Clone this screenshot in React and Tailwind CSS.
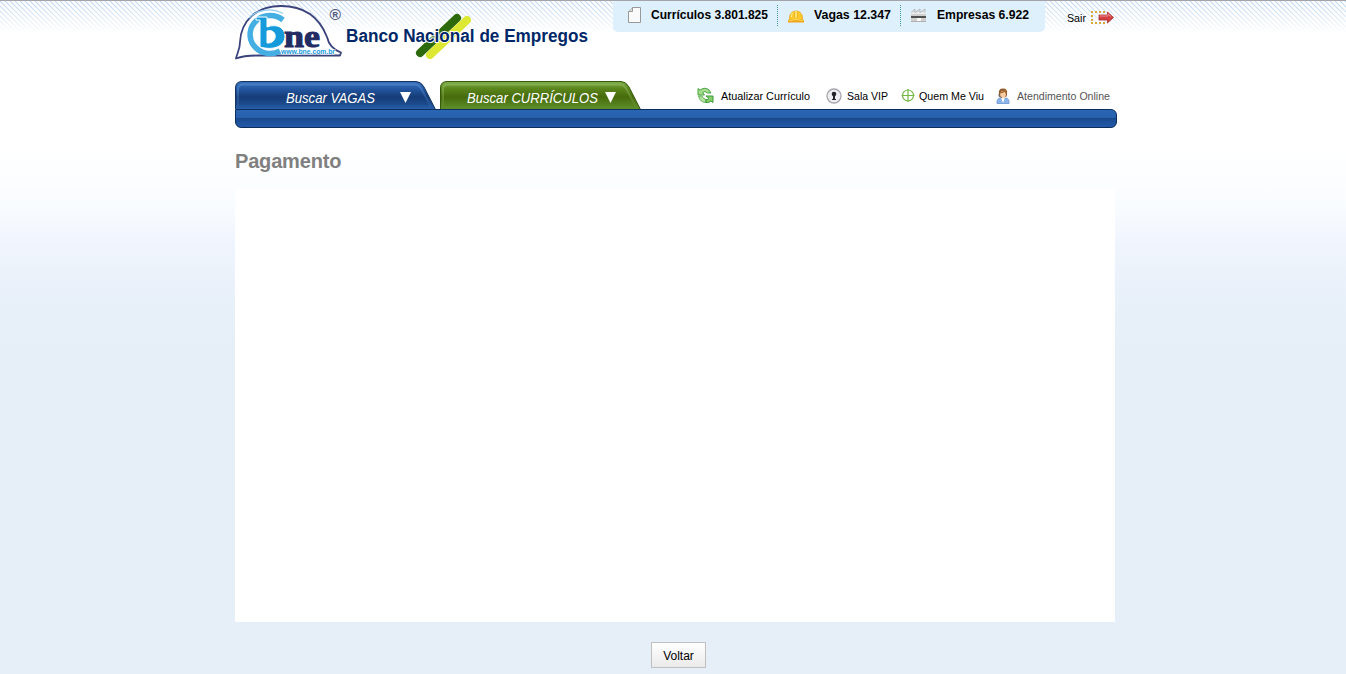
import React from "react";

function Logo() {
  return (
    <svg width="356" height="64" viewBox="0 0 356 64" className="block shrink-0 overflow-visible" fontFamily="'Liberation Sans', Arial, sans-serif">
      <path d="M5 41C6 20 21 5 46 5C71 5 85 18 92 36C94 45 99 49 106 51.500L105 54.500H23C16 54.500 8 55 1 57.500C2 52 5 49 5 41Z" fill="#fff" stroke="#3a437c" strokeWidth="1.800" strokeLinejoin="round" />
      <path d="M48 19A20 19 0 1 0 45 50" fill="none" stroke="#45afe3" strokeWidth="5.500" />
      <path d="M48 12.500A26 23 0 0 0 14 17" fill="none" stroke="#8ccdf0" strokeWidth="1.200" />
      <path d="M21 16H32V26C42 22 50 27 50 35C50 45 39 50 25 46V19H21ZM32 30V42C43 43 43 27 32 30Z" fill="#159bdc" fillRule="evenodd" stroke="#fff" strokeWidth="1" />
      <text x="49" y="45.500" fontSize="31" fontWeight="700" fontFamily="'Liberation Serif', serif" fill="#222c62" stroke="#222c62" strokeWidth="1" textLength="36" lengthAdjust="spacingAndGlyphs">ne</text>
      <text x="46" y="52.500" fontSize="6.500" fontWeight="700" fill="#199bdc" stroke="#fff" strokeWidth="1" paintOrder="stroke" textLength="54" lengthAdjust="spacingAndGlyphs">www.bne.com.br</text>
      <text x="94.500" y="19" fontSize="15" fontWeight="700" fill="#51587f" textLength="11.500" lengthAdjust="spacingAndGlyphs">®</text>
      <path d="M185 52L222 17" stroke="#2d6a0c" strokeWidth="8" strokeLinecap="round" />
      <path d="M195 54L232 19" stroke="#dce831" strokeWidth="8" strokeLinecap="round" />
      <text x="111" y="41" fontSize="17.500" fontWeight="700" fill="#002868" stroke="#fff" strokeWidth="2" paintOrder="stroke" textLength="242" lengthAdjust="spacingAndGlyphs">Banco Nacional de Empregos</text>
    </svg>
  );
}

function PageIcon() {
  return (
    <svg width="14" height="17" viewBox="0 0 14 17" className="block">
      <path d="M4.500 .5H12.500V15.500H.5V4.500Z" fill="#fafafa" stroke="#999" />
      <path d="M4.500 .5V4.500H.5" fill="#ddd" stroke="#999" />
    </svg>
  );
}

function HelmetIcon() {
  return (
    <svg width="16" height="13" viewBox="0 0 16 13" className="block">
      <path d="M1.500 10C1 4 4 1 8 1S15 4 14.500 10Z" fill="#fcca2c" stroke="#eea41e" strokeWidth=".8" />
      <path d="M6.500 1.500V8M9.500 1.500V8" stroke="#f0ae25" strokeWidth=".8" />
      <path d="M7 1H9V8H7Z" fill="#ffe36a" />
      <path d="M3.500 7C3.500 4 4 3.500 5 2.500" fill="none" stroke="#fff0a0" />
      <path d="M0 10Q8 7.500 16 10V12.500H0Z" fill="#f1a51c" />
      <path d="M1 10.500Q8 8.500 15 10.500" fill="none" stroke="#ffe05d" />
    </svg>
  );
}

function FactoryIcon() {
  return (
    <svg width="17" height="14" viewBox="0 0 17 14" className="block">
      <path d="M1 4.500L5 1V4.500L10 1V4.500L15 1V4.500" fill="#dcdcdc" stroke="#b0b0b0" strokeWidth=".8" />
      <path d="M1 5H16V14H1Z" fill="#d0d0d0" />
      <path d="M1 5H16V6H1Z" fill="#eee" />
      <path d="M1 8H16V10H1Z" fill="#505050" />
      <path d="M7 10H11V14H7Z" fill="#fafafa" />
      <path d="M1 13H16V14H1Z" fill="#b0b0b0" />
    </svg>
  );
}

function ExitIcon() {
  return (
    <svg width="24" height="15" viewBox="0 0 24 15" className="block">
      <path d="M0 2H14M0 13H14" stroke="#d8a838" strokeWidth="2" strokeDasharray="2 2" />
      <path d="M1 5V12" stroke="#d8a838" strokeWidth="2" strokeDasharray="2 2" />
      <path d="M8 5H16.500V2L22.500 7.500L16.500 13V10H8Z" fill="#d34242" stroke="#a92c2c" strokeWidth=".8" />
      <path d="M8.500 6H17V4L20 6.500" fill="none" stroke="#ee9090" />
    </svg>
  );
}

function RefreshIcon() {
  return (
    <svg width="17" height="17" viewBox="0 0 17 17" className="block">
      <path d="M1 1.500L3 3Q8-.5 12 3L14 6H10.500Q8 3.500 5.500 5.500L7.500 8H1Z" fill="#a6db8c" stroke="#4aa544" strokeWidth="1" strokeLinejoin="round" />
      <path d="M1.500 9Q3 15.500 9 15.500V12.500Q6 12 5 9Z" fill="#b7e3a2" stroke="#4aa544" strokeWidth=".8" />
      <path d="M16 15.500L14 14Q12 16 9 15.500V12.500Q11 13 12 11.500L9 9H16Z" fill="#86cf6d" stroke="#3c9a37" strokeWidth="1" strokeLinejoin="round" />
    </svg>
  );
}

function KeyholeIcon() {
  return (
    <svg width="16" height="16" viewBox="0 0 16 16" className="block">
      <circle cx="8" cy="8" r="7" fill="#efeff3" stroke="#a6a6ac" strokeWidth="1.300" />
      <circle cx="8" cy="6" r="2.300" fill="#252529" />
      <path d="M7 6H9V11H10V12H6V11H7Z" fill="#252529" />
    </svg>
  );
}

function TargetIcon() {
  return (
    <svg width="14" height="14" viewBox="0 0 14 14" className="block" fill="none" stroke="#74b844" strokeWidth="1.200">
      <circle cx="7" cy="6.500" r="5.500" />
      <path d="M7 0V13M.5 6.500H13.500" />
    </svg>
  );
}

function AgentIcon() {
  return (
    <svg width="14" height="16" viewBox="0 0 14 16" className="block">
      <path d="M1 15.500Q.5 10.500 4 10H10Q13.500 10.500 13 15.500Z" fill="#8bb4ea" stroke="#6a94d0" strokeWidth=".8" />
      <path d="M5 9.500L7 15L9 9.500Z" fill="#fff" />
      <path d="M3 6Q2 .5 7 .5T11 6Q11 9 9.500 9H4.500Q3 9 3 6Z" fill="#8f5a2c" />
      <ellipse cx="7" cy="6.500" rx="2.800" ry="3.800" fill="#f8cfa4" />
      <path d="M4 4.500Q7 5 9 2.500L10 5" fill="none" stroke="#a86d35" strokeWidth="1.500" />
      <path d="M3 6V8.500L6 9.500" fill="none" stroke="#555" strokeWidth=".8" />
    </svg>
  );
}

function Tab({ id, width, fill, edge, glow, labelClass, labelWidth, arrowClass, children }) {
  const path = `M.5 28.500V7Q.5 .5 7 .5H${width - 20}Q${width - 15} .5 ${width - 12} 6L${width - 0.5} 28.500`;
  return (
    <div className="relative h-7" style={{ width }}>
      <svg width={width} height="28" className="absolute inset-0">
        <defs>
          <linearGradient id={id} x1="0" y1="0" x2="0" y2="1">
            {fill.map(([offset, color]) => <stop key={offset} offset={offset} stopColor={color} />)}
          </linearGradient>
          <linearGradient id={`${id}Glow`} x1="0" y1="0" x2="0" y2="1">
            <stop offset="0" stopColor={glow} stopOpacity=".6" />
            <stop offset="1" stopColor={glow} stopOpacity=".1" />
          </linearGradient>
        </defs>
        <path d={path} fill={`url(#${id})`} stroke={edge} />
        <path d={`M3 26V8Q3 3.500 8 3.500H${width - 21}Q${width - 17} 3.500 ${width - 14} 9L${width - 5} 26`} fill="none" stroke={`url(#${id}Glow)`} strokeWidth="2" />
      </svg>
      <div className={`relative flex h-full items-center pt-1 text-white ${labelClass}`}>
        <svg width={labelWidth} height="20" className="block overflow-visible" fill="#fff" fontFamily="'Liberation Sans', Arial, sans-serif">
          <text x="0" y="16" fontSize="14" fontStyle="italic" textLength={labelWidth} lengthAdjust="spacingAndGlyphs">{children}</text>
        </svg>
        <svg width="11" height="11" className={arrowClass}><path d="M0 0H11L5.500 11Z" fill="#fff" /></svg>
      </div>
    </div>
  );
}

function FittedText({ width, children, size = 11, weight = 400, fill = "#000" }) {
  return (
    <svg width={width} height="16" className="block shrink-0 overflow-visible" fontFamily="'Liberation Sans', Arial, sans-serif">
      <text x="0" y="12" fontSize={size} fontWeight={weight} fill={fill} textLength={width} lengthAdjust="spacingAndGlyphs">{children}</text>
    </svg>
  );
}

function Header() {
  return (
    <header>
      <div className="flex h-20 items-start">
        <Logo />
        <div className="ml-[22px] flex h-[31px] w-[432px] rounded-b-[5px] bg-[#dff0fd]">
          <div className="flex w-[165px] border-r border-dotted border-[#4295ab] h-[21px] mt-1 pl-[15px]">
            <div className="mt-[2px]"><PageIcon /></div>
            <div className="ml-[9px] mt-[2px]"><FittedText width={117} size={12} weight={700}>Currículos 3.801.825</FittedText></div>
          </div>
          <div className="flex w-[123px] border-r border-dotted border-[#4295ab] h-[21px] mt-1 pl-[10px]">
            <div className="mt-[5px]"><HelmetIcon /></div>
            <div className="ml-[10px] mt-[2px]"><FittedText width={77} size={12} weight={700}>Vagas 12.347</FittedText></div>
          </div>
          <div className="mt-1 flex pl-[9px]">
            <div className="mt-[3px]"><FactoryIcon /></div>
            <div className="ml-[10px] mt-[2px]"><FittedText width={92} size={12} weight={700}>Empresas 6.922</FittedText></div>
          </div>
        </div>
        <div className="ml-[22px] mt-[9px] flex items-start">
          <FittedText width={19} size={10.5}>Sair</FittedText>
          <div className="ml-[5px]"><ExitIcon /></div>
        </div>
      </div>
      <div className="flex h-7">
        <Tab id="blueTab" width={201} fill={[[0, "#3c73bd"], [0.25, "#2458a3"], [0.55, "#153c77"], [0.8, "#1c4a8b"], [1, "#2863ae"]]} edge="#12345e" glow="#568bd3" labelClass="pl-[51px]" labelWidth={89} arrowClass="ml-[25px]">Buscar VAGAS</Tab>
        <div className="ml-1"><Tab id="greenTab" width={201} fill={[[0, "#7fae4b"], [0.25, "#5b861c"], [0.55, "#466b0c"], [1, "#60902a"]]} edge="#365b0b" glow="#91b860" labelClass="pl-[27px]" labelWidth={131} arrowClass="ml-[7px]">Buscar CURRÍCULOS</Tab></div>
        <nav className="ml-[56px] flex items-start pt-[7px]">
          <div className="-mt-px"><RefreshIcon /></div>
          <div className="ml-[7px]"><FittedText width={89}>Atualizar Currículo</FittedText></div>
          <div className="ml-4"><KeyholeIcon /></div>
          <div className="ml-[5px]"><FittedText width={41}>Sala VIP</FittedText></div>
          <div className="ml-[13px] mt-px"><TargetIcon /></div>
          <div className="ml-[4px]"><FittedText width={65}>Quem Me Viu</FittedText></div>
          <div className="ml-[12px]"><AgentIcon /></div>
          <div className="ml-[7px]"><FittedText width={93} fill="#555">Atendimento Online</FittedText></div>
        </nav>
      </div>
      <div className="h-[19px] w-[882px] rounded-b-[6px] rounded-tr-[6px] border border-[#0b2d60] bg-[linear-gradient(180deg,#2966b2_0%,#2860ad_46%,#184986_47%,#1d509a_65%,#2459a8_100%)]" />
    </header>
  );
}

export default function App() {
  return (
    <div className="relative h-[674px] w-[1346px] overflow-hidden border-t border-[#a4a4a8] bg-[linear-gradient(180deg,#fff_0px,#fff_145px,#f9fcff_205px,#f1f5fd_238px,#e8f0f9_295px,#e6eef7_345px)] font-['Liberation_Sans',Arial,sans-serif]">
      <svg width="1346" height="34" className="absolute left-0 top-0">
        <defs>
          <pattern id="hatch" width="5" height="5" patternUnits="userSpaceOnUse">
            <path d="M-1 -1L6 6M4 -1L6 1M-1 4L1 6" stroke="#b8d2f2" strokeWidth="1.100" />
          </pattern>
          <linearGradient id="hatchFade" x1="0" y1="0" x2="0" y2="1">
            <stop offset="0" stopColor="#fff" stopOpacity="0.05" />
            <stop offset=".95" stopColor="#fff" />
          </linearGradient>
        </defs>
        <path d="M0 0H1346V34H0Z" fill="url(#hatch)" />
        <path d="M0 0H1346V34H0Z" fill="url(#hatchFade)" />
      </svg>
      <div className="relative ml-[235px] w-[882px]">
        <Header />
        <main className="w-[880px]">
          <h1 className="flex h-[61px] items-start pt-[21px] text-[20px] font-bold leading-6 tracking-[-0.18px] text-[#808080]">Pagamento</h1>
          <section className="h-[433px] bg-white" />
          <div className="mt-5 pl-[416px]">
            <button className="flex h-[26px] w-[55px] items-center justify-center border border-[#c0c0c0] bg-[linear-gradient(180deg,#fff,#eaeaea)] pt-px text-[12px] text-black">Voltar</button>
          </div>
        </main>
      </div>
    </div>
  );
}
